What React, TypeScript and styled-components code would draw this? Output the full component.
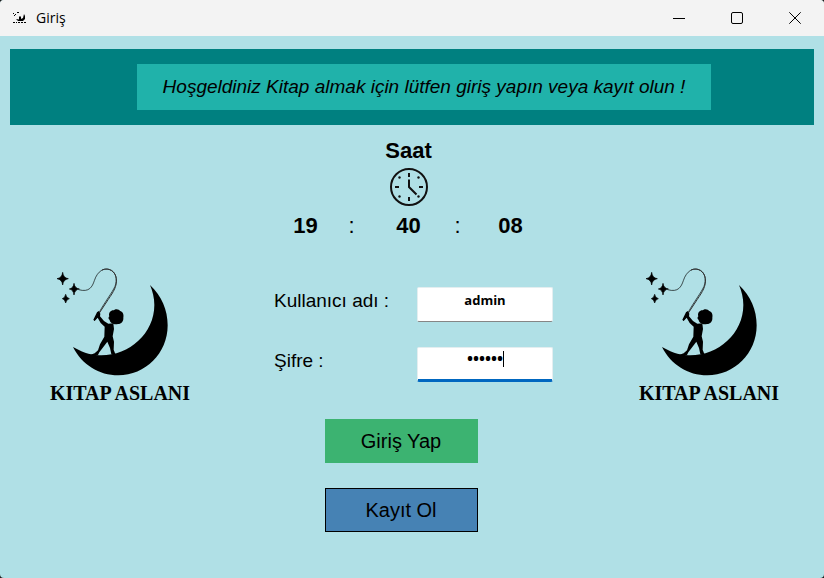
import React, { useState } from "react";
import styled, { createGlobalStyle } from "styled-components";

const GlobalStyle = createGlobalStyle`
  *, *::before, *::after { box-sizing: border-box; }
  html, body, #root { height: 100%; }
  body {
    margin: 0;
    background: #1c1c1c;
    color: #000;
    font-family: "Liberation Sans", Arial, sans-serif;
  }
`;

const Window = styled.div`
  display: flex;
  flex-direction: column;
  min-height: 100%;
  overflow: hidden;
  border-radius: 4px;
  background: #b0e0e6;
`;

const TitleBar = styled.header`
  display: flex;
  align-items: center;
  height: 36px;
  padding-left: 12px;
  background: #f3f3f3;
`;

const AppIcon = styled.svg`
  width: 15px;
  height: 14px;
  margin-right: 9px;
`;

const Title = styled.h1`
  flex: 1;
  margin: 0;
  font: 400 14px/20px "Open Sans", "Segoe UI", sans-serif;
`;

const CaptionButton = styled.button`
  display: grid;
  place-items: center;
  width: 58px;
  height: 36px;
  padding: 0;
  border: 0;
  background: transparent;

  svg {
    width: 12px;
    height: 12px;
    fill: none;
    stroke: #000;
  }
`;

const Content = styled.main`
  display: flex;
  flex-direction: column;
  flex: 1;
  padding: 13px 10px 24px;
`;

const Banner = styled.div`
  display: flex;
  justify-content: center;
  padding: 15px 0 15px 24px;
  background: #008080;
`;

const Welcome = styled.p`
  margin: 0;
  padding: 0 26px;
  background: #20b2aa;
  font-size: 19px;
  font-style: italic;
  line-height: 46px;
  white-space: nowrap;
`;

const Clock = styled.section`
  display: flex;
  flex-direction: column;
  align-items: center;
  padding: 14px 7px 0 0;
  font-size: 22px;
  line-height: 24px;
`;

const ClockHeading = styled.h2`
  margin: 0 0 4px;
  font-size: 22px;
`;

const ClockFace = styled.svg`
  width: 40px;
  height: 40px;
  margin-bottom: 7px;
`;

const Time = styled.div`
  display: grid;
  grid-template-columns: 44px 48px 66px 32px 74px;
  margin-left: 14px;
  text-align: center;
`;

const Body = styled.div`
  display: grid;
  grid-template-columns: 144px 1fr 144px;
  padding: 29px 33px 0 38px;
`;

const Brand = styled.figure`
  margin: 0;

  svg {
    display: block;
    width: 144px;
    height: 112px;
  }
`;

const BrandName = styled.figcaption`
  font: 700 20px/28px "Liberation Serif", serif;
  text-align: center;
  white-space: nowrap;
`;

const Form = styled.form`
  display: flex;
  flex-direction: column;
  align-items: center;
  gap: 25px;
  padding: 20px 2px 0 0;
`;

const Field = styled.div`
  display: grid;
  grid-template-columns: 143px 136px;
`;

const Label = styled.label`
  padding-top: 2px;
  font-size: 19px;
  line-height: 24px;
  white-space: nowrap;
`;

const InputFrame = styled.div`
  position: relative;
`;

const Input = styled.input<{ $active?: boolean }>`
  display: block;
  width: 100%;
  height: 35px;
  padding: 0 0 ${(p) => (p.$active ? 11 : 9)}px;
  border: 1px solid #e4eef0;
  border-bottom: ${(p) => (p.$active ? "3px solid #0067c0" : "1px solid #868686")};
  border-radius: 2px;
  outline: 0;
  background: #fff;
  font: 700 ${(p) => (p.$active ? 16 : 13)}px/18px "Open Sans", "Segoe UI", sans-serif;
  text-align: center;
`;

const Caret = styled.span`
  position: absolute;
  top: 4px;
  left: 86px;
  width: 1px;
  height: 16px;
  background: #000;
`;

const Actions = styled.div`
  display: flex;
  flex-direction: column;
  gap: 25px;
  margin-top: 12px;
  padding-right: 25px;
`;

const ActionButton = styled.button<{ $tone: string; $outline: string }>`
  width: 153px;
  height: 44px;
  padding: 0;
  border: 1px solid ${(p) => p.$outline};
  background: ${(p) => p.$tone};
  color: #000;
  font: 400 20px/24px "Liberation Sans", Arial, sans-serif;
`;

function MoonBoy() {
  return (
    <>
      <path d="M330 90C365 122 383 165 383 211C383 295 316 361 235 361C177 361 126 329 99 276C122 289 147 300 178 301C265 304 343 237 343 150C343 129 338 108 330 90Z" />
      <path d="M68 52Q70 69 85 71Q70 73 68 90Q66 73 51 71Q66 69 68 52ZM102 85Q104 100 118 102Q104 104 102 120Q100 104 88 102Q100 100 102 85ZM77 118Q79 129 88 131Q79 133 77 144Q75 133 67 131Q75 129 77 118Z" stroke="#000" strokeWidth="2" />
      <path d="M116 104C148 113 157 95 163 77C173 46 193 39 207 43C230 49 232 76 225 94C216 114 195 140 177 173" fill="none" stroke="#000" strokeWidth="2" />
      <path d="M186 45C207 36 226 50 229 70C232 93 220 111 205 133L163 197" fill="none" stroke="#333" strokeWidth="3" />
      <path d="M160 194L171 172L176 168L181 176L180 184L192 198L205 206L220 205L222 222L218 244L222 260L221 284L226 297L214 298L210 279L202 260L190 276L178 292L174 300H150L164 295L174 286L180 268L193 245L194 215L182 204L173 188L164 198Z" />
      <path d="M208 184C204 173 214 165 221 166C226 160 238 162 240 168C249 170 252 179 250 188C251 198 244 207 234 207C222 210 210 204 209 195C204 191 205 187 208 184Z" />
    </>
  );
}

function Logo() {
  return (
    <Brand>
      <svg viewBox="24 36 432 336" aria-hidden="true">
        <MoonBoy />
      </svg>
      <BrandName>KITAP ASLANI</BrandName>
    </Brand>
  );
}

export default function App() {
  const [user, setUser] = useState("admin");
  const [password, setPassword] = useState("******");

  return (
    <>
      <GlobalStyle />
      <Window>
        <TitleBar>
          <AppIcon viewBox="0 0 15 14" aria-hidden="true">
            <path d="M1 2h1v1H1zM3 3h1v1H3zM2 4h1v1H2zM5 1h2v1H5zM12 3l1 2v3l-2 2H6L4 8l3 .500L7 6l1-1 1 1v2l2-1zM1 11h2v1H1zM4 11h1v1H4zM6 11h2v1H6zM9 11h2v1H9zM12 11h2v1h-2z" />
          </AppIcon>
          <Title>Giriş</Title>
          <CaptionButton type="button" aria-label="Simge durumuna küçült">
            <svg viewBox="0 0 12 12"><path d="M0 6.500h12" /></svg>
          </CaptionButton>
          <CaptionButton type="button" aria-label="Ekranı kapla">
            <svg viewBox="0 0 12 12"><rect x=".5" y=".5" width="11" height="11" rx="1.500" /></svg>
          </CaptionButton>
          <CaptionButton type="button" aria-label="Kapat">
            <svg viewBox="0 0 12 12"><path d="M.3.300l11.400 11.400M11.700.300L.3 11.700" /></svg>
          </CaptionButton>
        </TitleBar>
        <Content>
          <Banner>
            <Welcome>Hoşgeldiniz Kitap almak için lütfen giriş yapın veya kayıt olun !</Welcome>
          </Banner>
          <Clock>
            <ClockHeading>Saat</ClockHeading>
            <ClockFace viewBox="0 0 40 40" fill="none" stroke="#111" strokeWidth="2" aria-hidden="true">
              <circle cx="20" cy="20" r="18" />
              <path d="M20 6v4M20 30v4M6 20h4M30 20h4" />
              <path d="M20 12.500V20l7.500 7.500" />
              <g fill="#111" stroke="none">
                <circle cx="10.500" cy="10.500" r="1.200" />
                <circle cx="29.500" cy="10.500" r="1.200" />
                <circle cx="10.500" cy="29.500" r="1.200" />
                <circle cx="29.500" cy="29.500" r="1.200" />
              </g>
            </ClockFace>
            <Time>
              <b>19</b>
              <span>:</span>
              <b>40</b>
              <span>:</span>
              <b>08</b>
            </Time>
          </Clock>
          <Body>
            <Logo />
            <Form onSubmit={(e) => e.preventDefault()}>
              <Field>
                <Label htmlFor="user">Kullanıcı adı :</Label>
                <Input id="user" value={user} onChange={(e) => setUser(e.target.value)} />
              </Field>
              <Field>
                <Label htmlFor="password">Şifre :</Label>
                <InputFrame>
                  <Input
                    id="password"
                    type="password"
                    $active
                    value={password}
                    onChange={(e) => setPassword(e.target.value)}
                  />
                  <Caret />
                </InputFrame>
              </Field>
              <Actions>
                <ActionButton type="submit" $tone="#3cb371" $outline="#3cb371">Giriş Yap</ActionButton>
                <ActionButton type="button" $tone="#4682b4" $outline="#000">Kayıt Ol</ActionButton>
              </Actions>
            </Form>
            <Logo />
          </Body>
        </Content>
      </Window>
    </>
  );
}
